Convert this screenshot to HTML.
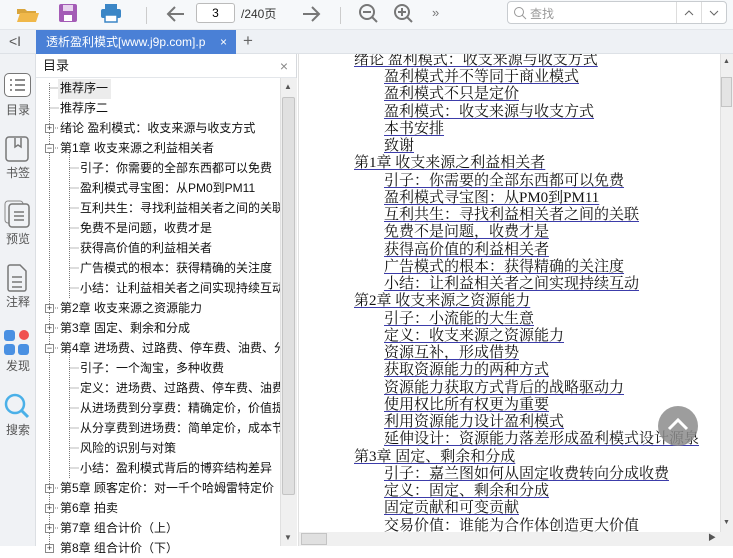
<!DOCTYPE html>
<html><head><meta charset="utf-8"><style>
*{margin:0;padding:0;box-sizing:border-box}
body{width:733px;height:546px;overflow:hidden;background:#fff;font-family:"Liberation Sans","Noto Sans CJK SC",sans-serif;position:relative}
.tb{position:absolute;left:0;top:0;width:733px;height:30px;background:#f6f8fa;border-bottom:1px solid #e3e6ea}
.tabs{position:absolute;left:0;top:30px;width:733px;height:24px;background:#eef1f5;border-bottom:1px solid #dde1e6}
.side{position:absolute;left:0;top:54px;width:36px;height:492px;background:#f0f2f5;border-right:1px solid #dcdfe3}
.side .it{position:absolute;left:0;width:36px;text-align:center;font-size:12px;color:#555}
.toc{position:absolute;left:36px;top:54px;width:261px;height:492px;background:#fff;border-right:1px solid #d6d9dd}
.toch{height:24px;border-bottom:1px solid #e3e6ea;font-size:13px;line-height:24px;padding-left:7px;color:#222}
.row{position:absolute;font-size:12px;color:#111;white-space:nowrap;height:20px;line-height:20px}
.pm{position:absolute;width:9px;height:9px;border:1px solid #888;background:#fff;font-size:9px;line-height:7px;text-align:center;color:#333}
.doc{position:absolute;left:298px;top:54px;width:422px;height:492px;background:#fff;border-left:1px solid #e0e0e0;overflow:hidden}
.l{position:absolute;font-family:"Liberation Serif","Noto Serif CJK SC",serif;font-size:15px;color:#111;white-space:nowrap;line-height:17px;text-decoration:underline;text-decoration-color:#3c3caa;text-underline-offset:2px}
.vs{position:absolute;background:#f0f0f0}
</style></head><body>
<div class="tb">
<svg style="position:absolute;left:16px;top:4px" width="24" height="20"><path d="M1 5h8l2 2h9v3H1z" fill="#d9a53c"/><path d="M1 18l3-9h19l-3 9z" fill="#f0b84a"/></svg>
<svg style="position:absolute;left:58px;top:3px" width="20" height="20"><rect x="1" y="1" width="18" height="18" rx="2" fill="#a45cb6"/><rect x="5" y="2" width="10" height="6" fill="#e8d4ee"/><rect x="6" y="12" width="8" height="6" fill="#fff"/></svg>
<svg style="position:absolute;left:100px;top:3px" width="22" height="20"><rect x="5" y="1" width="12" height="5" fill="#3b86c6"/><rect x="1" y="6" width="20" height="9" rx="2" fill="#3b86c6"/><rect x="5" y="12" width="12" height="7" fill="#fff" stroke="#3b86c6" stroke-width="1.5"/></svg>
<div style="position:absolute;left:146px;top:7px;width:1px;height:17px;background:#ccc"></div>
<svg style="position:absolute;left:166px;top:5px" width="20" height="18"><path d="M18 9H3M9 2L2 9l7 7" stroke="#777" stroke-width="2" fill="none"/></svg>
<div style="position:absolute;left:196px;top:3px;width:39px;height:20px;border:1px solid #bbb;border-radius:3px;background:#fff;font-size:12px;text-align:center;line-height:18px">3</div>
<div style="position:absolute;left:241px;top:5px;font-size:12px;color:#333">/240页</div>
<svg style="position:absolute;left:301px;top:5px" width="20" height="18"><path d="M2 9h15M11 2l7 7-7 7" stroke="#777" stroke-width="2" fill="none"/></svg>
<div style="position:absolute;left:340px;top:7px;width:1px;height:17px;background:#ccc"></div>
<svg style="position:absolute;left:358px;top:3px" width="22" height="22"><circle cx="9" cy="9" r="7" stroke="#777" stroke-width="2" fill="none"/><path d="M5 9h8M14 14l5 5" stroke="#777" stroke-width="2"/></svg>
<svg style="position:absolute;left:393px;top:3px" width="22" height="22"><circle cx="9" cy="9" r="7" stroke="#777" stroke-width="2" fill="none"/><path d="M5 9h8M9 5v8M14 14l5 5" stroke="#777" stroke-width="2"/></svg>
<div style="position:absolute;left:432px;top:5px;font-size:13px;color:#777">»</div>
<div style="position:absolute;left:507px;top:1px;width:220px;height:23px;border:1px solid #c8ccd0;border-radius:4px;background:#fff"></div>
<svg style="position:absolute;left:513px;top:6px" width="14" height="14"><circle cx="6" cy="6" r="4.5" stroke="#999" fill="none"/><path d="M9 9l4 4" stroke="#999"/></svg>
<div style="position:absolute;left:530px;top:5px;font-size:12px;color:#999">查找</div>
<div style="position:absolute;left:676px;top:2px;width:1px;height:21px;background:#ddd"></div>
<div style="position:absolute;left:701px;top:2px;width:1px;height:21px;background:#ddd"></div>
<svg style="position:absolute;left:684px;top:9px" width="10" height="8"><path d="M1 6l4-4 4 4" stroke="#666" fill="none"/></svg>
<svg style="position:absolute;left:709px;top:9px" width="10" height="8"><path d="M1 2l4 4 4-4" stroke="#666" fill="none"/></svg>
</div>
<div class="tabs">
<div style="position:absolute;left:9px;top:3px;font-size:14px;color:#555">&lt;I</div>
<div style="position:absolute;left:36px;top:0;width:200px;height:24px;background:#4a80d6;color:#fff;font-size:12px;line-height:24px;padding-left:10px;white-space:nowrap;overflow:hidden">透析盈利模式[www.j9p.com].p<span style="position:absolute;left:184px;top:0">×</span></div>
<div style="position:absolute;left:243px;top:1px;font-size:17px;color:#666">+</div>
</div>
<div class="side">
<div style="position:absolute;left:4px;top:19px;width:27px;height:24px;border:1.5px solid #777;border-radius:5px;background:#fff"></div>
<svg style="position:absolute;left:8px;top:23px" width="20" height="16"><path d="M2 3h2M7 3h10M2 8h2M7 8h10M2 13h2M7 13h10" stroke="#666" stroke-width="1.6"/></svg>
<div class="it" style="top:47px">目录</div>
<svg style="position:absolute;left:5px;top:82px" width="24" height="26"><rect x="1" y="1" width="22" height="24" rx="3" stroke="#777" stroke-width="1.5" fill="none"/><path d="M10 2v9l3-2 3 2V2" stroke="#777" stroke-width="1.5" fill="none"/></svg>
<div class="it" style="top:110px">书签</div>
<svg style="position:absolute;left:4px;top:146px" width="26" height="28"><rect x="1" y="1" width="18" height="22" rx="3" stroke="#888" fill="none"/><rect x="5" y="4" width="20" height="23" rx="3" stroke="#777" stroke-width="1.5" fill="#f0f2f5"/><path d="M10 12h10M10 16h10M10 20h10" stroke="#777" stroke-width="1.5"/></svg>
<div class="it" style="top:176px">预览</div>
<svg style="position:absolute;left:6px;top:210px" width="22" height="28"><path d="M2 3a2 2 0 0 1 2-2h10l6 6v18a2 2 0 0 1-2 2H4a2 2 0 0 1-2-2z" stroke="#777" stroke-width="1.5" fill="none"/><path d="M6 13h10M6 18h10M6 23h10" stroke="#777" stroke-width="1.5"/></svg>
<div class="it" style="top:239px">注释</div>
<svg style="position:absolute;left:4px;top:276px" width="26" height="26"><rect x="0" y="0" width="11" height="11" rx="3" fill="#4a90e2"/><circle cx="20" cy="5" r="5" fill="#f05050"/><rect x="0" y="14" width="11" height="11" rx="3" fill="#4a90e2"/><rect x="14" y="14" width="11" height="11" rx="3" fill="#4a90e2"/></svg>
<div class="it" style="top:303px">发现</div>
<svg style="position:absolute;left:3px;top:338px" width="28" height="28"><circle cx="12" cy="12" r="9" stroke="#4ab0e8" stroke-width="2.5" fill="none"/><path d="M19 19l6 6" stroke="#4ab0e8" stroke-width="3"/></svg>
<div class="it" style="top:367px">搜索</div>
</div>
<div class="toc">
<div class="toch">目录<span style="position:absolute;right:8px;top:0;color:#888;font-size:14px">×</span></div>
<svg style="position:absolute;left:0;top:24px" width="245" height="468"><g stroke="#777" stroke-dasharray="1 1" fill="none">
<path d="M13.5 5v464"/><path d="M13.5 10h10M13.5 30h10M17 50h6M17 70h6M17 230h6M17 250h6M17 270h6M17 410h6M17 430h6M17 450h6"/>
<path d="M33.5 75v145M33.5 275v125"/>
<path d="M33.5 90h10M33.5 110h10M33.5 130h10M33.5 150h10M33.5 170h10M33.5 190h10M33.5 210h10M33.5 290h10M33.5 310h10M33.5 330h10M33.5 350h10M33.5 370h10M33.5 390h10"/></g></svg>
<div style="position:absolute;left:22px;top:25px;width:53px;height:20px;background:#ececec"></div>
<div class="row" style="left:24px;top:24px">推荐序一</div>
<div class="row" style="left:24px;top:44px">推荐序二</div>
<div class="pm" style="left:9px;top:70px">+</div><div class="row" style="left:24px;top:64px">绪论 盈利模式：收支来源与收支方式</div>
<div class="pm" style="left:9px;top:90px">−</div><div class="row" style="left:24px;top:84px">第1章 收支来源之利益相关者</div>
<div class="row" style="left:44px;top:104px">引子：你需要的全部东西都可以免费</div>
<div class="row" style="left:44px;top:124px">盈利模式寻宝图：从PM0到PM11</div>
<div class="row" style="left:44px;top:144px">互利共生：寻找利益相关者之间的关联</div>
<div class="row" style="left:44px;top:164px">免费不是问题，收费才是</div>
<div class="row" style="left:44px;top:184px">获得高价值的利益相关者</div>
<div class="row" style="left:44px;top:204px">广告模式的根本：获得精确的关注度</div>
<div class="row" style="left:44px;top:224px">小结：让利益相关者之间实现持续互动</div>
<div class="pm" style="left:9px;top:250px">+</div><div class="row" style="left:24px;top:244px">第2章 收支来源之资源能力</div>
<div class="pm" style="left:9px;top:270px">+</div><div class="row" style="left:24px;top:264px">第3章 固定、剩余和分成</div>
<div class="pm" style="left:9px;top:290px">−</div><div class="row" style="left:24px;top:284px">第4章 进场费、过路费、停车费、油费、分</div>
<div class="row" style="left:44px;top:304px">引子：一个淘宝，多种收费</div>
<div class="row" style="left:44px;top:324px">定义：进场费、过路费、停车费、油费</div>
<div class="row" style="left:44px;top:344px">从进场费到分享费：精确定价，价值提</div>
<div class="row" style="left:44px;top:364px">从分享费到进场费：简单定价，成本节</div>
<div class="row" style="left:44px;top:384px">风险的识别与对策</div>
<div class="row" style="left:44px;top:404px">小结：盈利模式背后的博弈结构差异</div>
<div class="pm" style="left:9px;top:430px">+</div><div class="row" style="left:24px;top:424px">第5章 顾客定价：对一千个哈姆雷特定价</div>
<div class="pm" style="left:9px;top:450px">+</div><div class="row" style="left:24px;top:444px">第6章 拍卖</div>
<div class="pm" style="left:9px;top:470px">+</div><div class="row" style="left:24px;top:464px">第7章 组合计价（上）</div>
<div class="pm" style="left:9px;top:490px">+</div><div class="row" style="left:24px;top:484px">第8章 组合计价（下）</div>
<div style="position:absolute;left:244px;top:24px;width:17px;height:468px;background:#f0f0f0;border-left:1px solid #e0e0e0"></div>
<div style="position:absolute;left:246px;top:43px;width:13px;height:398px;background:#e0e0e0;border:1px solid #c4c4c4;border-radius:2px"></div>
<div style="position:absolute;left:248px;top:28px;font-size:8px;color:#555">▲</div>
<div style="position:absolute;left:248px;top:479px;font-size:8px;color:#555">▼</div>
</div>
<div class="doc">
<div class="l" style="left:55px;top:-2px">绪论 盈利模式：收支来源与收支方式</div>
<div class="l" style="left:85px;top:15px">盈利模式并不等同于商业模式</div>
<div class="l" style="left:85px;top:32px">盈利模式不只是定价</div>
<div class="l" style="left:85px;top:50px">盈利模式：收支来源与收支方式</div>
<div class="l" style="left:85px;top:67px">本书安排</div>
<div class="l" style="left:85px;top:84px">致谢</div>
<div class="l" style="left:55px;top:101px">第1章 收支来源之利益相关者</div>
<div class="l" style="left:85px;top:119px">引子：你需要的全部东西都可以免费</div>
<div class="l" style="left:85px;top:136px">盈利模式寻宝图：从PM0到PM11</div>
<div class="l" style="left:85px;top:153px">互利共生：寻找利益相关者之间的关联</div>
<div class="l" style="left:85px;top:170px">免费不是问题，收费才是</div>
<div class="l" style="left:85px;top:188px">获得高价值的利益相关者</div>
<div class="l" style="left:85px;top:205px">广告模式的根本：获得精确的关注度</div>
<div class="l" style="left:85px;top:222px">小结：让利益相关者之间实现持续互动</div>
<div class="l" style="left:55px;top:239px">第2章 收支来源之资源能力</div>
<div class="l" style="left:85px;top:257px">引子：小流能的大生意</div>
<div class="l" style="left:85px;top:274px">定义：收支来源之资源能力</div>
<div class="l" style="left:85px;top:291px">资源互补，形成借势</div>
<div class="l" style="left:85px;top:308px">获取资源能力的两种方式</div>
<div class="l" style="left:85px;top:326px">资源能力获取方式背后的战略驱动力</div>
<div class="l" style="left:85px;top:343px">使用权比所有权更为重要</div>
<div class="l" style="left:85px;top:360px">利用资源能力设计盈利模式</div>
<div class="l" style="left:85px;top:377px">延伸设计：资源能力落差形成盈利模式设计源泉</div>
<div class="l" style="left:55px;top:395px">第3章 固定、剩余和分成</div>
<div class="l" style="left:85px;top:412px">引子：嘉兰图如何从固定收费转向分成收费</div>
<div class="l" style="left:85px;top:429px">定义：固定、剩余和分成</div>
<div class="l" style="left:85px;top:446px">固定贡献和可变贡献</div>
<div class="l" style="left:85px;top:464px;text-decoration:none">交易价值：谁能为合作体创造更大价值</div>
<div style="position:absolute;left:359px;top:352px;width:40px;height:40px;border-radius:50%;background:rgba(140,140,140,.85)"></div>
<svg style="position:absolute;left:367px;top:362px" width="24" height="16"><path d="M3 13l9-9 9 9" stroke="#fff" stroke-width="3" fill="none"/></svg>
<div style="position:absolute;left:0;top:478px;width:422px;height:14px;background:#f0f0f0"></div>
<div style="position:absolute;left:2px;top:479px;width:26px;height:12px;background:#e0e0e0;border:1px solid #c4c4c4"></div>
<div style="position:absolute;left:409px;top:478px;font-size:8px;color:#555">▶</div>
</div>
<div class="vs" style="left:720px;top:54px;width:13px;height:478px;border-left:1px solid #e0e0e0"></div>
<div style="position:absolute;left:721px;top:77px;width:11px;height:30px;background:#e4e4e4;border:1px solid #c4c4c4"></div>
<div style="position:absolute;left:723px;top:58px;font-size:7px;color:#555">▲</div>
<div style="position:absolute;left:723px;top:519px;font-size:7px;color:#555">▼</div>
<div class="vs" style="left:720px;top:532px;width:13px;height:14px"></div>
</body></html>
